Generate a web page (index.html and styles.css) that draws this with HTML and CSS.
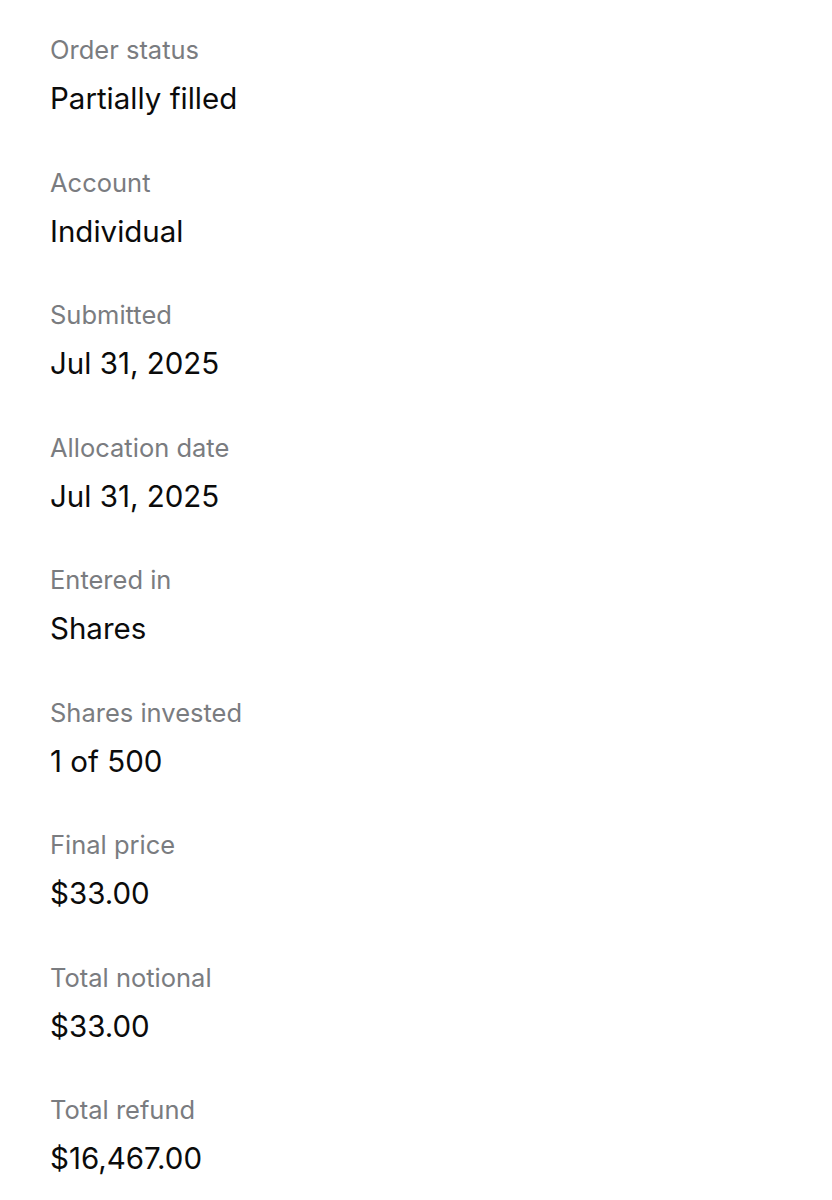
FILE: index.html
```html
<!DOCTYPE html>
<html>
<head>
<meta charset="utf-8">
<link rel="stylesheet" href="styles.css">
</head>
<body>
<div class="details">
  <div class="item"><div class="label">Order status</div><div class="value">Partially filled</div></div>
  <div class="item"><div class="label">Account</div><div class="value">Individual</div></div>
  <div class="item"><div class="label">Submitted</div><div class="value">Jul 31, 2025</div></div>
  <div class="item"><div class="label">Allocation date</div><div class="value">Jul 31, 2025</div></div>
  <div class="item"><div class="label">Entered in</div><div class="value">Shares</div></div>
  <div class="item"><div class="label">Shares invested</div><div class="value">1 of 500</div></div>
  <div class="item"><div class="label">Final price</div><div class="value">$33.00</div></div>
  <div class="item"><div class="label">Total notional</div><div class="value">$33.00</div></div>
  <div class="item"><div class="label">Total refund</div><div class="value">$16,467.00</div></div>
</div>
</body>
</html>
```
FILE: styles.css
```css
html, body {
  margin: 0;
  padding: 0;
  background: #ffffff;
}
body {
  font-family: Inter, "Noto Sans", sans-serif;
}
.details {
  display: flex;
  flex-direction: column;
  padding: 33px 50px 0 50px;
  gap: 0;
}
.item {
  display: flex;
  flex-direction: column;
  height: 132.5px;
}
.label {
  font-size: 25.5px;
  line-height: 34px;
  color: #7a7c80;
}
.value {
  font-size: 29.5px;
  line-height: 34px;
  margin-top: 14px;
  color: #0b0b0b;
}
```
